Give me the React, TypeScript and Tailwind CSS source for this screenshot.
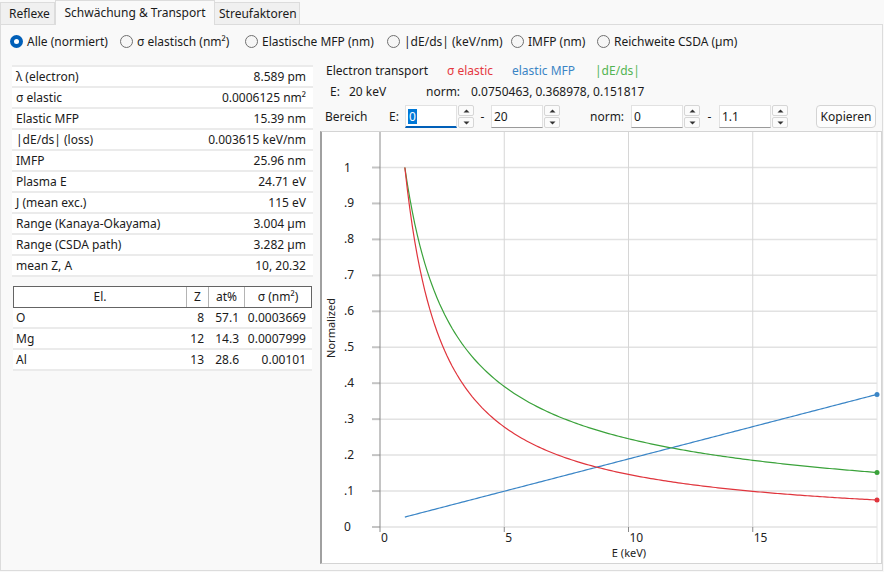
import React from "react";

const props = [
    ["λ (electron)", "8.589 pm"],
    ["σ elastic", "0.0006125 nm²"],
    ["Elastic MFP", "15.39 nm"],
    ["|dE/ds| (loss)", "0.003615 keV/nm"],
    ["IMFP", "25.96 nm"],
    ["Plasma E", "24.71 eV"],
    ["J (mean exc.)", "115 eV"],
    ["Range (Kanaya-Okayama)", "3.004 µm"],
    ["Range (CSDA path)", "3.282 µm"],
    ["mean Z, A", "10, 20.32"],
];

const elements = [
    ["O", "8", "57.1", "0.0003669"],
    ["Mg", "12", "14.3", "0.0007999"],
    ["Al", "13", "28.6", "0.00101"],
];

const radios = [
    { label: "Alle (normiert)", w: "w-[110px]", on: true },
    { label: "σ elastisch (nm²)", w: "w-[125px]", on: false },
    { label: "Elastische MFP (nm)", w: "w-[142px]", on: false },
    { label: "|dE/ds| (keV/nm)", w: "w-[124px]", on: false },
    { label: "IMFP (nm)", w: "w-[86px]", on: false },
    { label: "Reichweite CSDA (µm)", w: "w-[160px]", on: false },
];

// plot mapping (local svg coords)
const X = (e: number) => 58 + 24.85 * e;
const Y = (v: number) => 395 - 359.5 * v;

const red = (e: number) => 1 / (1 + 0.6484 * (e - 1));
const blue = (e: number) => 0.02769 * (1 + 0.6484 * (e - 1));
const green = (e: number) =>
    0.5 * Math.pow(e, -0.63) + (0.5 * Math.log(4.35 * e)) / (e * Math.log(4.35));

const path = (f: (e: number) => number) => {
    const pts: string[] = [];
    for (let i = 0; i <= 190; i++) {
        const e = 1 + i * 0.1;
        pts.push(`${X(e).toFixed(2)},${Y(f(e)).toFixed(2)}`);
    }
    return "M" + pts.join(" L");
};

const Arrow: React.FC<{ up?: boolean }> = ({ up }) => (
    <div className="h-[11px] bg-[#fbfbfb] border border-[#d6d6d6] rounded-[2px] flex items-center justify-center">
        <svg width="7" height="4" viewBox="0 0 7 4">
            <path d={up ? "M0.5 3.5 L3.5 0.5 L6.5 3.5 Z" : "M0.5 0.5 L3.5 3.5 L6.5 0.5 Z"} fill="#333" />
        </svg>
    </div>
);

const Spin: React.FC<{ value: string; focus?: boolean }> = ({ value, focus }) => (
    <div className="flex h-[23px] items-stretch">
        <div
            className={`w-[52px] bg-white border border-[#e2e2e2] flex items-center pl-[2px] ${
                focus ? "border-b-2 border-b-[#005fb8]" : "border-b-[#9a9a9a]"
            }`}
        >
            {focus ? <span className="bg-[#0078d7] text-white px-[1px] leading-[15px]">{value}</span> : <span>{value}</span>}
        </div>
        <div className="ml-[1px] w-[16px] flex flex-col gap-[1px] leading-none">
            <Arrow up />
            <Arrow />
        </div>
    </div>
);

const Chart: React.FC = () => {
    const grid = Array.from({ length: 11 }, (_, i) => i / 10);
    const ylab = ["0", ".1", ".2", ".3", ".4", ".5", ".6", ".7", ".8", ".9", "1"];
    return (
        <div className="w-[562px] h-[433px] bg-white border border-[#d4d4d4] border-l-[#a0a0a0] border-l-2">
            <svg width="560" height="431" viewBox="0 0 560 431" className="block" fontFamily="'Noto Sans', sans-serif" fontSize="12">
                {grid.map((v) => (
                    <g key={v}>
                        <line x1={50} x2={58} y1={Y(v)} y2={Y(v)} stroke="#c4c4c4" strokeWidth={2} />
                        <line x1={58} x2={555} y1={Y(v)} y2={Y(v)} stroke="#e2e2e2" strokeWidth={1.5} />
                    </g>
                ))}
                {[5, 10, 15].map((e) => (
                    <g key={e}>
                        <line x1={X(e)} x2={X(e)} y1={0} y2={395} stroke="#d6d6d6" strokeWidth={1} />
                        <line x1={X(e)} x2={X(e)} y1={395} y2={400} stroke="#888" strokeWidth={1} />
                    </g>
                ))}
                <line x1={555} x2={555} y1={0} y2={431} stroke="#e4e4e4" strokeWidth={1} />
                <line x1={58} x2={58} y1={0} y2={400} stroke="#8a8a8a" strokeWidth={1} />
                {grid.map((v, i) => (
                    <text key={v} x={22} y={Y(v) + 4} fill="#222">
                        {ylab[i]}
                    </text>
                ))}
                {[0, 5, 10, 15].map((e) => (
                    <text key={e} x={X(e) + 1} y={410} fill="#222">
                        {e}
                    </text>
                ))}
                <text x={307} y={425} textAnchor="middle" fill="#222" fontSize="11">
                    E (keV)
                </text>
                <text x={13} y={196} textAnchor="middle" fill="#222" fontSize="11" transform="rotate(-90 13 196)">
                    Normalized
                </text>
                <path d={path(blue)} fill="none" stroke="#3a85c6" strokeWidth={1.2} />
                <path d={path(green)} fill="none" stroke="#3aa23a" strokeWidth={1.2} />
                <path d={path(red)} fill="none" stroke="#e0353d" strokeWidth={1.2} />
                <circle cx={555} cy={Y(blue(20))} r={2.5} fill="#3a85c6" />
                <circle cx={555} cy={Y(green(20))} r={2.5} fill="#3aa23a" />
                <circle cx={555} cy={Y(red(20))} r={2.5} fill="#e0353d" />
            </svg>
        </div>
    );
};

const App: React.FC = () => {
    return (
        <div className="w-[884px] h-[572px] bg-[#f9f9f9] flex flex-col font-['Noto_Sans',sans-serif] text-[12px] leading-[16px] text-[#1b1b1b] overflow-hidden">
            {/* tabs */}
            <div className="h-[24px] flex items-end shrink-0">
                <div className="h-[22px] w-[55px] bg-[#f0f0f0] border border-b-0 border-[#dcdcdc] flex items-center pl-[8px]">Reflexe</div>
                <div className="h-[25px] w-[160px] bg-[#f9f9f9] border border-b-0 border-[#dcdcdc] flex items-center justify-center relative top-[1px] z-10">
                    Schwächung &amp; Transport
                </div>
                <div className="h-[22px] w-[85px] bg-[#f0f0f0] border border-b-0 border-l-0 border-[#dcdcdc] flex items-center pl-[4px]">Streufaktoren</div>
            </div>

            {/* pane */}
            <div className="flex-1 flex flex-col border border-[#dcdcdc] mr-[1px] mb-[1px] bg-[#f9f9f9]">
                <div className="h-[33px] flex items-center pl-[9px] shrink-0">
                    {radios.map((r) => (
                        <div key={r.label} className={`${r.w} flex items-center gap-[4px] shrink-0`}>
                            {r.on ? (
                                <span className="w-[13px] h-[13px] rounded-full bg-[#005fb8] flex items-center justify-center">
                                    <span className="w-[5px] h-[5px] rounded-full bg-white" />
                                </span>
                            ) : (
                                <span className="w-[13px] h-[13px] rounded-full border border-[#707070] bg-[#f6f6f6]" />
                            )}
                            <span className="whitespace-nowrap">{r.label}</span>
                        </div>
                    ))}
                </div>

                <div className="flex">
                    {/* left panel */}
                    <div className="w-[319px] shrink-0 pl-[11px] pt-[7px]">
                        <div className="w-[301px] border-t-2 border-[#ebebeb]">
                            {props.map(([k, v]) => (
                                <div key={k} className="h-[21px] bg-white border-b-2 border-[#ebebeb] flex items-center justify-between pl-[4px] pr-[7px]">
                                    <span>{k}</span>
                                    <span>{v}</span>
                                </div>
                            ))}
                        </div>

                        <div className="w-[299px] mt-[9px] ml-[1px]">
                            <div className="grid grid-cols-[173px_22px_36px_66px] h-[22px] bg-white border border-[#646464]">
                                <div className="flex items-center justify-center border-r border-[#b4b4b4]">El.</div>
                                <div className="flex items-center justify-center border-r border-[#b4b4b4]">Z</div>
                                <div className="flex items-center justify-center border-r border-[#b4b4b4]">at%</div>
                                <div className="flex items-center justify-center">σ (nm²)</div>
                            </div>
                            {elements.map(([el, z, at, s]) => (
                                <div key={el} className="grid grid-cols-[173px_22px_36px_66px] h-[21px] bg-white border-b-2 border-[#ebebeb] items-center">
                                    <span className="pl-[3px]">{el}</span>
                                    <span className="text-right pr-[4px]">{z}</span>
                                    <span className="text-right pr-[5px]">{at}</span>
                                    <span className="text-right pr-[4px]">{s}</span>
                                </div>
                            ))}
                        </div>
                    </div>

                    {/* right panel */}
                    <div className="flex-1 flex flex-col pt-[2px]">
                        <div className="h-[21px] flex items-center pl-[6px]">
                            <span className="w-[121px]">Electron transport</span>
                            <span className="w-[65px] text-[#e5383f]">σ elastic</span>
                            <span className="w-[83px] text-[#3b85c5]">elastic MFP</span>
                            <span className="text-[#52b452]">|dE/ds|</span>
                        </div>
                        <div className="h-[21px] flex items-center pl-[10px]">
                            <span className="w-[19px]">E:</span>
                            <span className="w-[77px]">20 keV</span>
                            <span className="w-[45px]">norm:</span>
                            <span>0.0750463, 0.368978, 0.151817</span>
                        </div>
                        <div className="h-[29px] flex items-center pl-[5px]">
                            <span className="w-[64px]">Bereich</span>
                            <span className="w-[16px]">E:</span>
                            <Spin value="0" focus />
                            <span className="w-[17px] text-center">-</span>
                            <Spin value="20" />
                            <span className="w-[30px]" />
                            <span className="w-[41px]">norm:</span>
                            <Spin value="0" />
                            <span className="w-[19px] text-center">-</span>
                            <Spin value="1.1" />
                            <span className="flex-1" />
                            <button className="h-[23px] w-[60px] mr-[6px] bg-[#fdfdfd] border border-[#d4d4d4] rounded-[4px] flex items-center justify-center">
                                Kopieren
                            </button>
                        </div>
                        <Chart />
                    </div>
                </div>
            </div>
        </div>
    );
};

export default App;
